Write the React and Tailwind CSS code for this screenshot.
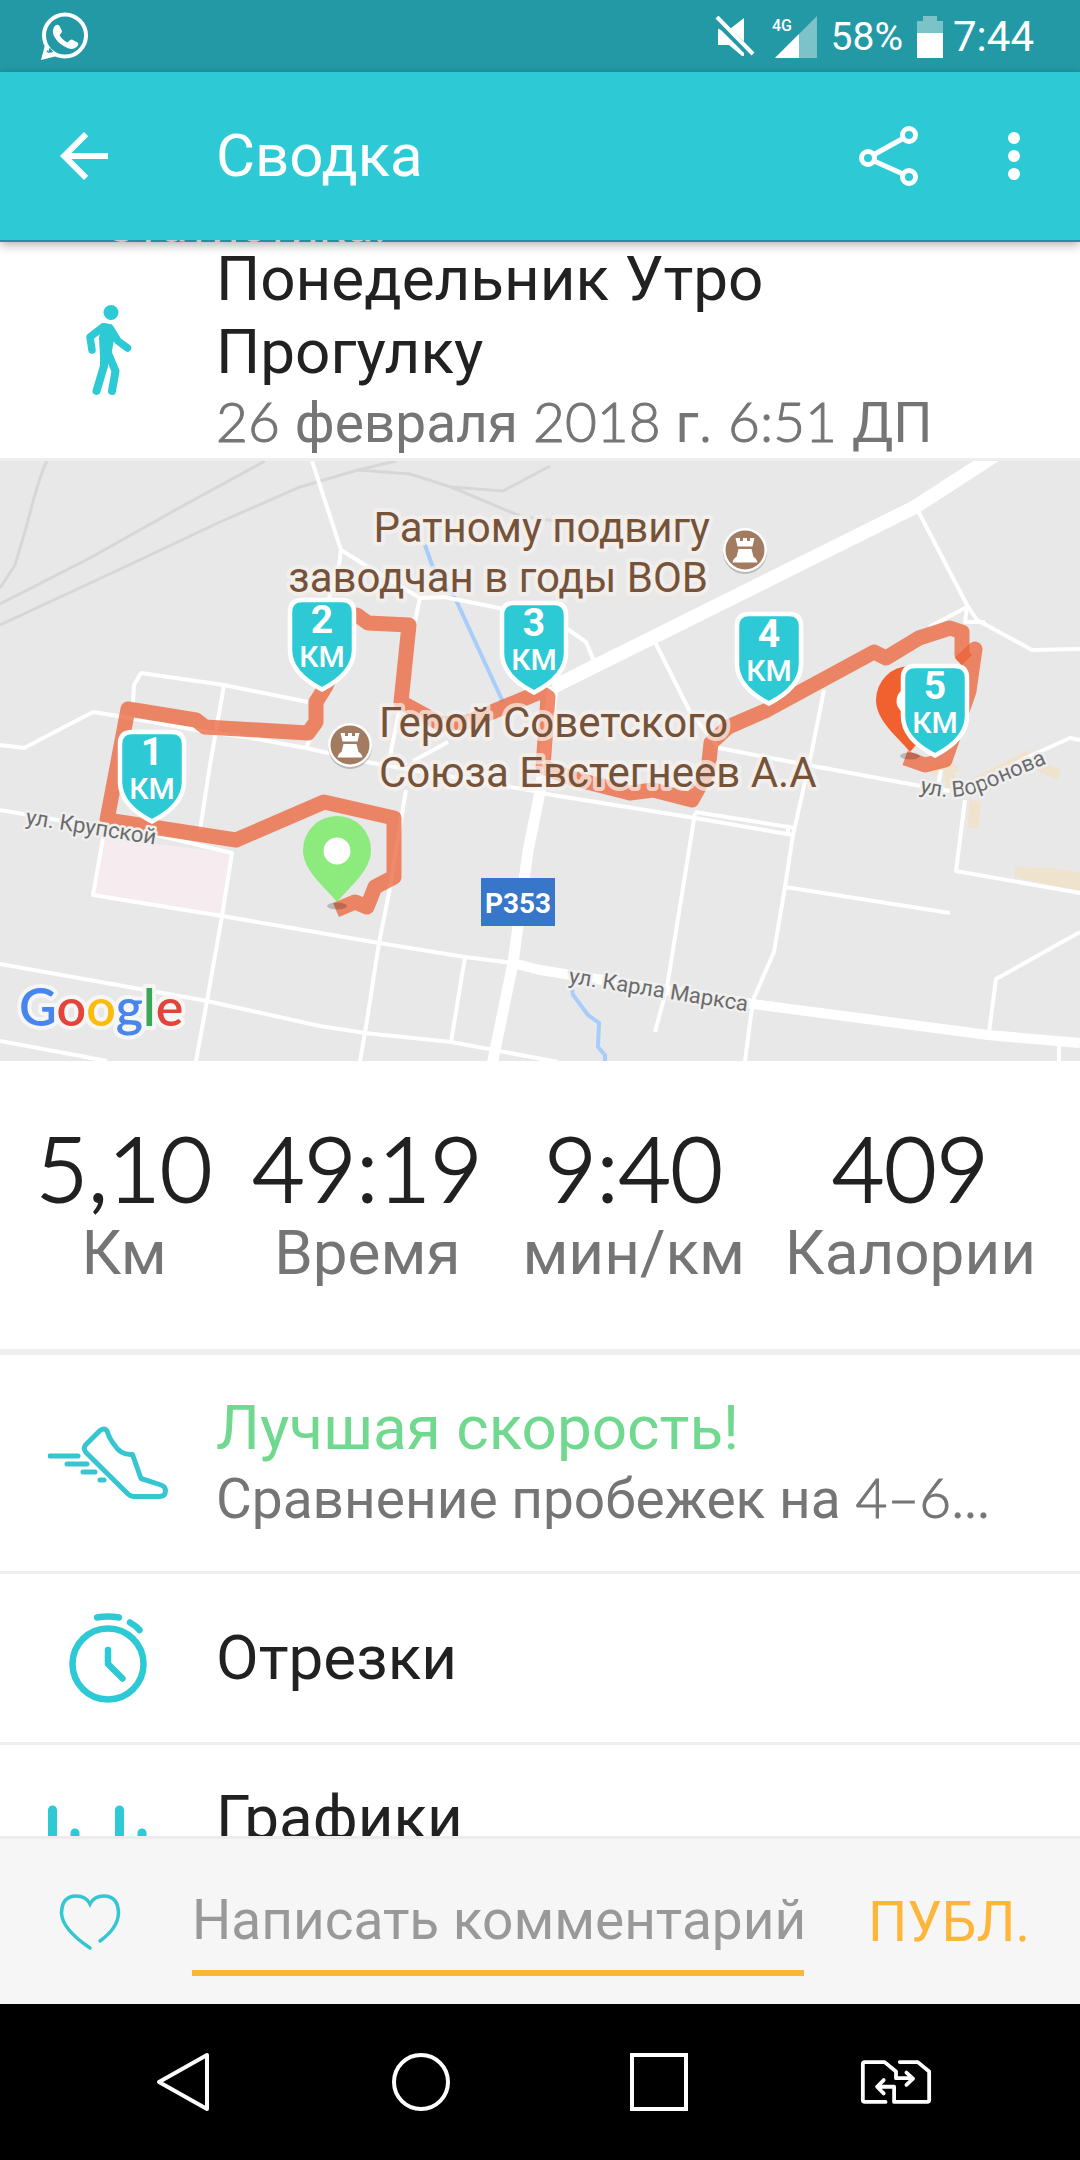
import React from 'react'

const stats = [
  { value: '5,10', label: 'Км' },
  { value: '49:19', label: 'Время' },
  { value: '9:40', label: 'мин/км' },
  { value: '409', label: 'Калории' },
]

const kmMarkers = [
  { km: 1, x: 152, y: 269 },
  { km: 2, x: 322, y: 137 },
  { km: 3, x: 534, y: 140 },
  { km: 4, x: 769, y: 151 },
  { km: 5, x: 935, y: 203 },
]

// latin digits use the light brand face, cyrillic falls back to Roboto
function Digits({ children }) {
  return (
    <span className="font-['Lato',sans-serif] text-[55px] font-light leading-none [-webkit-text-stroke:1px]">{children}</span>
  )
}

function StatusBar() {
  return (
    <div className="flex h-18 shrink-0 items-center bg-[#2499a6] pl-10 pr-[46px] pt-[2px] text-white">
      <svg className="size-[50px]" viewBox="0 0 50 50" fill="none">
        <circle cx="25" cy="23.500" r="21" stroke="#fff" strokeWidth="4" />
        <path d="M5 33 L1 48 L17 44 L12 39 L6.500 40.500 L8.500 35 Z" fill="#fff" />
        <path d="M8 41 L9.500 35.500 L13.500 40 Z" fill="#2499a6" />
        <path d="M14 15 q3 -4 5.500 -1 l2.500 5 q0 2 -2.500 4 q2.500 5 8 7.500 q3 -3.500 4.500 -3 l5.500 3 q2 2 -1 4.500 q-5 4 -12 -0.500 q-9 -5 -11.500 -13 q-0.500 -4 1 -6.500z" fill="#fff" />
      </svg>
      <div className="ml-auto flex items-center">
        <svg className="h-[42px] w-10" viewBox="0 0 40 42" fill="#fff">
          <path d="M3 12.500 L6.500 14.500 L29 37 V40 L27 40 L14 29 H3z" />
          <path d="M29 2 V25.500 L15.500 12.500z" />
          <path d="M2 1 L38 38" stroke="#fff" strokeWidth="4" />
        </svg>
        <svg className="ml-4 h-[42px] w-[48px]" viewBox="0 0 48 42">
          <text x="1" y="15" className="fill-white font-['Roboto',sans-serif] text-[16px] font-medium">4G</text>
          <path d="M46 0 V42 H4z" fill="#7cc2c9" />
          <path d="M28 18 V42 H4z" fill="#fff" />
        </svg>
        <span className="ml-3 font-['Roboto',sans-serif] text-[39px] leading-[44px]">58%</span>
        <svg className="ml-[14px] h-[42px] w-[26px]" viewBox="0 0 26 42">
          <path d="M6 0 H20 V5 H26 V17 H0 V5 H6z" fill="#7cc2c9" />
          <path d="M0 17 H26 V42 H0z" fill="#fff" />
        </svg>
        <span className="ml-[10px] font-['Roboto',sans-serif] text-[42px] leading-[44px]">7:44</span>
      </div>
    </div>
  )
}

function AppBar() {
  return (
    <header className="relative z-10 shrink-0 bg-[#2dcad6] shadow-[0_3px_10px_rgba(0,0,0,0.3)]">
      <div className="flex h-42 items-center text-white">
        <button aria-label="Назад" className="flex w-54 shrink-0 pl-12">
          <svg className="size-18" viewBox="0 0 24 24" fill="#fff">
            <path d="M20 11H7.830l5.590-5.590L12 4l-8 8 8 8 1.410-1.410L7.830 13H20v-2z" />
          </svg>
        </button>
        <h1 className="flex-1 font-['Roboto',sans-serif] text-[60px] leading-[72px]">Сводка</h1>
        <button aria-label="Поделиться" className="mr-21">
          <svg className="h-[64px] w-[62px]" viewBox="0 0 62 64" fill="none" stroke="#fff" strokeWidth="5">
            <circle cx="10" cy="34" r="6.500" />
            <circle cx="51" cy="11" r="6.500" />
            <circle cx="51" cy="53" r="6.500" />
            <path d="M16 30.500 L45 14.500 M16 37 L45 50" />
          </svg>
        </button>
        <button aria-label="Меню" className="mr-14">
          <svg className="h-12 w-5" viewBox="0 0 20 48" fill="#fff">
            <circle cx="10" cy="6" r="6" />
            <circle cx="10" cy="24" r="6" />
            <circle cx="10" cy="42" r="6" />
          </svg>
        </button>
      </div>
      {/* last visible sliver of the section scrolled under the bar */}
      <div className="flex h-[2px] items-end overflow-hidden bg-[#258f9c] pl-26">
        <span className="font-['Roboto',sans-serif] text-[50px] leading-[34px] text-[#c4c8c8]">Статистика!</span>
      </div>
    </header>
  )
}

function WalkIcon() {
  return (
    <svg className="h-[92px] w-12" viewBox="0 0 48 92" fill="none" stroke="#2dcad6" strokeLinecap="round" strokeLinejoin="round">
      <circle cx="27" cy="8.500" r="7.500" fill="#2dcad6" stroke="none" />
      <path d="M17 20 Q22 17 28 22 L30 36 L27 52 H16 L15 34z" fill="#2dcad6" stroke="none" />
      <path d="M19 23 L6 33 L8 46" strokeWidth="7.500" />
      <path d="M26 24 L34 37 L43.500 44" strokeWidth="7.500" />
      <path d="M20 48 V62 L12.500 87" strokeWidth="8" />
      <path d="M23.500 48 L31.500 67 L28 87" strokeWidth="8" />
    </svg>
  )
}

function ShoeIcon() {
  return (
    <svg className="h-[76px] w-30" viewBox="0 0 120 76" fill="none" stroke="#35c6d2" strokeWidth="5" strokeLinecap="round" strokeLinejoin="round">
      <path d="M52 5.500 L38 19.500 Q34.500 23 38 27.500 L80 69 Q82.500 71.500 85.500 71.500 H112 Q117.500 71 117.500 65.500 Q117.500 61.500 113 60 L93 53.500 L84.500 29.500 Q73 30.500 66.500 20 Q61 13 59.500 7 Q57.500 2 52 5.500z" />
      <path d="M2 31 H30 M19 39 H39 M35 47 H47 M52 55 H56" />
    </svg>
  )
}

function StopwatchIcon() {
  return (
    <svg className="h-[90px] w-[78px]" viewBox="0 0 78 90" fill="none" stroke="#2dcad6" strokeWidth="6.500" strokeLinecap="round" strokeLinejoin="round">
      <circle cx="39" cy="51" r="35.500" />
      <path d="M28 4.500 Q39 2.500 50 4.500 M61 9.500 Q67 13 70.500 17" />
      <path d="M39 37 V51 L53.500 65.500" />
    </svg>
  )
}

function ChartIcon() {
  return (
    <svg className="h-24 w-30" viewBox="0 0 120 96" fill="none" stroke="#2dcad6" strokeWidth="9" strokeLinecap="round">
      <path d="M4.500 5 V92 M27 28 V92 M71.500 5 V92 M94 28 V92" />
    </svg>
  )
}

function KmMarker({ km, x, y }) {
  return (
    <g transform={`translate(${x} ${y})`}>
      <path
        d="M-20 2 H20 Q32 2 32 14 V52 Q32 75 0 91.500 Q-32 75 -32 52 V14 Q-32 2 -20 2z"
        fill="#2dcad6"
        stroke="#fff"
        strokeWidth="4.500"
      />
      <text y="35" textAnchor="middle" className="fill-white text-[39px] font-bold">{km}</text>
      <text y="69" textAnchor="middle" className="fill-white text-[30px] font-medium">КМ</text>
    </g>
  )
}

function Pin({ x, y, color }) {
  return (
    <g transform={`translate(${x} ${y})`}>
      <ellipse cx="0" cy="55" rx="10" ry="3.500" fill="#000" opacity="0.200" />
      <path d="M0 -35 A34 34 0 0 1 34 -1 C34 20 12 36 0 51 C-12 36 -34 20 -34 -1 A34 34 0 0 1 0 -35z" fill={color} />
      <circle r="13.500" fill="#fff" />
    </g>
  )
}

function Monument({ x, y }) {
  return (
    <g transform={`translate(${x} ${y})`}>
      <circle cy="2" r="22" fill="#999" opacity="0.600" />
      <circle r="22" fill="#fff" />
      <circle r="19.500" fill="#a27b60" />
      <path d="M-9.500 -12 h4.500 v3 h3 v-3 h4 v3 h3 v-3 h4.500 l-2 8.500 h-15z M-6.500 -1 h13 l2 8 q3 1 4 5.500 h-25 q1 -4.500 4 -5.500z" fill="#fff" />
    </g>
  )
}

function RouteMap() {
  return (
    <svg className="block h-[600px] w-full shrink-0 bg-[#e8e8e8] font-['Roboto',sans-serif]" viewBox="0 0 1080 600" preserveAspectRatio="xMidYMid slice" fill="none">
      {/* areas */}
      <path d="M103 377 L232 392 L220 455 L93 434z" fill="#f6ebef" />
      <g stroke="#efe3ce" strokeWidth="11">
        <path d="M930 308 L950 306 L946 301 L953 330 M966 327 L1030 294 M1040 305 L1059 314 M975 340 L973 367" />
      </g>
      <path d="M1015 406 L1053 407 L1080 412 V430 L1015 416z" fill="#efe3ce" />

      {/* railways */}
      <g stroke="#d7d7d7" strokeWidth="3">
        <path d="M47 0 Q40 12 26 67 L15 104 L0 127" />
        <path d="M265 0 L179 47 L90 97 L0 143" />
        <path d="M396 0 L358 9 L300 26 L220 61 L114 111 L0 164" />
        <path d="M358 9 L410 13 L451 26 L503 30 L550 5" />
        <path d="M451 26 L520 55 L555 60" />
      </g>

      {/* water */}
      <g stroke="#a8cdfb" strokeWidth="4">
        <path d="M425 84 L432 104 M456 139 L503 241 M432 104 L456 139" />
        <path d="M571 522 L573 534 L588 554 L599 562 L598 586 L605 594 V600" />
      </g>

      {/* streets */}
      <g stroke="#fff" strokeWidth="4" strokeLinejoin="round">
        <path d="M312 0 L341 89 L365 104 L420 137 L444 136 L499 147 L569 169 L586 181 L594 200" />
        <path d="M341 89 L339 104 L325 150 M420 137 L415 160" />
        <path d="M915 44 L967 144 L977 159 L1032 189 L1080 188" />
        <path d="M929 166 L967 146 L965 161 L985 161" />
        <path d="M654 179 L690 251 L719 287 L781 299 L915 324 L950 330" />
        <path d="M824 229 L810 299 L793 374 L785 426 L774 491 L753 539 L745 600" />
        <path d="M941 309 L937 330 M965 339 L956 410 L1080 432" />
        <path d="M965 332 L1026 297 L1070 277 L1080 279" />
        <path d="M540 332 L695 357 L793 374 M695 351 L795 367 M788 366 V373" />
        <path d="M695 352 L667 526 L655 571 M785 426 L950 452" />
        <path d="M1080 471 L996 518 L989 571 M1059 584 V600" />
        <path d="M0 349 L103 367 L165 376 L232 392 L222 455 L207 540 L196 600" />
        <path d="M103 377 L93 434 L222 455 L379 482 L465 496 L513 502" />
        <path d="M0 503 L207 540 L320 565 L365 572 L451 581 L558 601" />
        <path d="M0 580 L107 600" />
        <path d="M406 329 L389 432 L379 482 L365 572 L360 600 M465 496 L451 581" />
        <path d="M224 224 L210 304 L200 369" />
        <path d="M133 242 L134 224 L141 212 L224 224 L308 241" />
        <path d="M0 284 L24 287 L93 251 L124 256 L196 269 L251 277 L306 287 L372 302 L540 331" />
        <path d="M310 278 L306 287 M399 251 L389 300 M413 300 L448 281" />
      </g>
      <g stroke="#fff">
        <path d="M1000 -9 L915 46 L553 226" strokeWidth="14" />
        <path d="M553 226 L540 331 L528 390 L513 502 L492 604" strokeWidth="11" />
        <path d="M513 502 L540 509 L753 543 L988 574 L1080 582" strokeWidth="10" />
      </g>

      {/* track */}
      <g stroke="#ec6136" strokeOpacity="0.740" strokeWidth="15" strokeLinejoin="round">
        <path d="M336 449 L355 441 L367 446 L375 426 L394 416 V357 L324 341 L236 379 L107 359 L128 248 L196 259 L205 266 L308 272 L316 261 V241 L326 225 L340 190 L345 160 L357 154 L368 162 L409 164 L401 241 L441 263 L468 261 L540 231 L548 236 L543 306 L571 317 L630 332 L653 329 L692 339 L708 310 L711 282 L728 266 L767 249 L874 191 L886 197 L919 177 L950 167 L962 171 V194 L967 199" />
        <path d="M960 202 L975 188 L969 230 L945 299 L925 304 L905 297" />
      </g>

      <Pin x="337" y="390" color="#8dea7d" />
      <Pin x="910" y="240" color="#f0612f" />

      <rect x="481" y="417" width="74" height="48" fill="#3776c8" />
      <text x="518" y="452" textAnchor="middle" className="fill-white text-[28px] font-bold">Р353</text>

      {/* street names */}
      <path id="voronova" d="M919 331 Q960 344 1000 322 L1070 293" />
      <g className="fill-[#6b6b6b] text-[22px]" stroke="#efefef" strokeWidth="5" strokeLinejoin="round" paintOrder="stroke">
        <text transform="translate(25 363) rotate(9)">ул. Крупской</text>
        <text transform="translate(568 522) rotate(9)">ул. Карла Маркса</text>
        <text><textPath href="#voronova">ул. Воронова</textPath></text>
      </g>

      {/* places */}
      <g className="fill-[#765338] text-[42px]" stroke="#f6f2ef" strokeOpacity="0.700" strokeWidth="8" strokeLinejoin="round" paintOrder="stroke">
        <text x="710" y="81" textAnchor="end">Ратному подвигу</text>
        <text x="708" y="131" textAnchor="end">заводчан в годы ВОВ</text>
        <text x="379" y="276">Герой Советского</text>
        <text x="379" y="326">Союза Евстегнеев А.А</text>
      </g>
      <Monument x="745" y="89" />
      <Monument x="350" y="284" />

      {kmMarkers.map((marker) => (
        <KmMarker key={marker.km} {...marker} />
      ))}

      <text x="19" y="565" stroke="#f6f6f6" strokeWidth="8" strokeLinejoin="round" paintOrder="stroke" className="font-['Lato',sans-serif] text-[52px] font-semibold">
        <tspan fill="#4885ed">G</tspan>
        <tspan fill="#e2453a">o</tspan>
        <tspan fill="#fbbd0d">o</tspan>
        <tspan fill="#4885ed">g</tspan>
        <tspan fill="#3aa757">l</tspan>
        <tspan fill="#e2453a">e</tspan>
      </text>
    </svg>
  )
}

function Row({ icon, children }) {
  return (
    <button className="flex w-full shrink-0 items-center border-b-3 border-[#eeeeee] text-left">
      <span className="flex w-54 shrink-0 justify-center">{icon}</span>
      <span className="block min-w-0 flex-1 pr-6">{children}</span>
    </button>
  )
}

function CommentBar() {
  return (
    <form className="flex h-42 shrink-0 items-center border-t-3 border-[#ececec] bg-[#f6f6f6] pl-[58px] pr-[50px] font-['Roboto',sans-serif]">
      <button type="button" aria-label="Нравится" className="mr-[70px]">
        <svg className="h-[58px] w-16" viewBox="0 0 64 58" fill="none" stroke="#35c6d2" strokeWidth="3.500" strokeLinecap="round">
          <path d="M32 55 Q4 36 3.500 20 Q4 3 18 3 Q28 3 32 11 Q36 3 46 3 Q60 3 60.500 20 Q60 35 42 48" />
        </svg>
      </button>
      <input
        type="text"
        aria-label="Комментарий"
        placeholder="Написать комментарий"
        className="mt-4 min-w-0 flex-1 border-b-6 border-[#fdb53a] bg-transparent pb-[14px] text-[55px] leading-[72px] outline-none placeholder:text-[#999999]"
      />
      <button type="button" className="ml-16 text-[55px] leading-[72px] text-[#fdb53a]">ПУБЛ.</button>
    </form>
  )
}

function NavBar() {
  return (
    <nav className="flex h-39 shrink-0 items-center justify-between bg-black px-[146px]">
      <button aria-label="Назад" className="flex w-19 justify-center">
        <svg className="size-15" viewBox="0 0 60 60" fill="none" stroke="#fff" strokeWidth="4" strokeLinejoin="round">
          <path d="M53 3 V57 L5 30z" />
        </svg>
      </button>
      <button aria-label="Домой" className="flex w-19 justify-center">
        <svg className="size-15" viewBox="0 0 60 60" fill="none" stroke="#fff" strokeWidth="4">
          <circle cx="30" cy="30" r="27" />
        </svg>
      </button>
      <button aria-label="Недавние" className="flex w-19 justify-center">
        <svg className="size-15" viewBox="0 0 60 60" fill="none" stroke="#fff" strokeWidth="4">
          <path d="M3 3 H57 V57 H3z" />
        </svg>
      </button>
      <button aria-label="Сменить SIM" className="flex w-19 justify-center">
        <svg className="h-12 w-18" viewBox="0 0 76 48" fill="none" stroke="#fff" strokeWidth="4" strokeLinejoin="round" strokeLinecap="round">
          <path d="M27 45 H5 Q3 45 3 43 V5 Q3 3 5 3 H26 L38 13 V20 H53 M49 14 L56 20.500 L49 27" />
          <path d="M42 3 H61 L73 13 V43 Q73 45 71 45 H36 V29 H20 M25 22 L18 29 L25 36" />
        </svg>
      </button>
    </nav>
  )
}

export default function App() {
  return (
    <div className="flex h-screen flex-col overflow-hidden bg-white font-['Roboto',sans-serif] text-[#212121]">
      <StatusBar />
      <AppBar />

      <main className="flex min-h-0 flex-1 flex-col overflow-hidden">
        <section className="flex shrink-0 items-center border-b-3 border-[#eeeeee]">
          <div className="flex w-54 shrink-0 justify-center">
            <WalkIcon />
          </div>
          <div className="flex-1 pr-40">
            <h2 className="text-[62px] leading-[73px]">Понедельник Утро Прогулку</h2>
            <p className="whitespace-nowrap text-[55px] leading-[70px] text-[#757575]">
              <Digits>26 </Digits>февраля<Digits> 2018 </Digits>г.<Digits> 6:51 </Digits>ДП
            </p>
          </div>
        </section>

        <RouteMap />

        <section className="flex shrink-0 justify-between border-b-6 border-[#eeeeee] pb-15 pl-9 pr-11 pt-14">
          {stats.map((item) => (
            <div key={item.label} className="text-center">
              <div className="font-['Lato',sans-serif] text-[90px] font-light leading-[100px] [-webkit-text-stroke:2px]">{item.value}</div>
              <div className="text-[62px] leading-[72px] text-[#757575]">{item.label}</div>
            </div>
          ))}
        </section>

        <Row icon={<ShoeIcon />}>
          <span className="block pt-[37px] text-[62px] leading-[72px] text-[#71d98f]">Лучшая скорость!</span>
          <span className="block truncate pb-[37px] text-[55px] leading-[70px] text-[#757575]">
            Сравнение пробежек на<Digits> 4–6...</Digits>
          </span>
        </Row>
        <Row icon={<StopwatchIcon />}>
          <span className="block py-12 text-[62px] leading-[72px]">Отрезки</span>
        </Row>
        <Row icon={<ChartIcon />}>
          <span className="block pb-[107px] pt-[37px] text-[62px] leading-[72px]">Графики</span>
        </Row>
      </main>

      <CommentBar />
      <NavBar />
    </div>
  )
}
